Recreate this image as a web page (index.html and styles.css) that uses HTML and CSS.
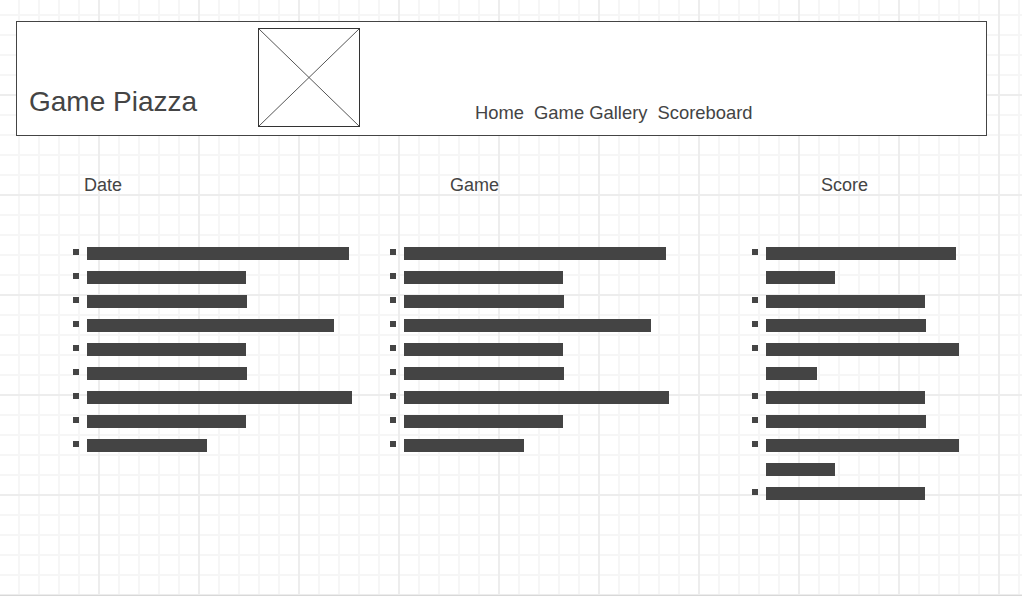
FILE: index.html
```html
<!DOCTYPE html>
<html lang="en">
<head>
<meta charset="utf-8">
<title>Game Piazza</title>
<link rel="stylesheet" href="styles.css">
</head>
<body>
<div class="page">
  <header class="header">
    <h1 class="title">Game Piazza</h1>
    <div class="logo">
      <svg width="100" height="97" viewBox="0 0 100 97" preserveAspectRatio="none">
        <line x1="0" y1="0" x2="100" y2="97" stroke="#555" stroke-width="1"/>
        <line x1="100" y1="0" x2="0" y2="97" stroke="#555" stroke-width="1"/>
      </svg>
    </div>
    <nav class="nav">
      <span class="nav-item">Home</span>
      <span class="nav-item">Game Gallery</span>
      <span class="nav-item">Scoreboard</span>
    </nav>
  </header>

  <main class="columns">
    <section class="col col-date">
      <h2 class="col-title">Date</h2>
      <ul class="list">
        <li class="row"><span class="bullet"></span><div class="bars"><span class="bar" style="width:262px"></span></div></li>
        <li class="row"><span class="bullet"></span><div class="bars"><span class="bar" style="width:159px"></span></div></li>
        <li class="row"><span class="bullet"></span><div class="bars"><span class="bar" style="width:160px"></span></div></li>
        <li class="row"><span class="bullet"></span><div class="bars"><span class="bar" style="width:247px"></span></div></li>
        <li class="row"><span class="bullet"></span><div class="bars"><span class="bar" style="width:159px"></span></div></li>
        <li class="row"><span class="bullet"></span><div class="bars"><span class="bar" style="width:160px"></span></div></li>
        <li class="row"><span class="bullet"></span><div class="bars"><span class="bar" style="width:265px"></span></div></li>
        <li class="row"><span class="bullet"></span><div class="bars"><span class="bar" style="width:159px"></span></div></li>
        <li class="row"><span class="bullet"></span><div class="bars"><span class="bar" style="width:120px"></span></div></li>
      </ul>
    </section>

    <section class="col col-game">
      <h2 class="col-title">Game</h2>
      <ul class="list">
        <li class="row"><span class="bullet"></span><div class="bars"><span class="bar" style="width:262px"></span></div></li>
        <li class="row"><span class="bullet"></span><div class="bars"><span class="bar" style="width:159px"></span></div></li>
        <li class="row"><span class="bullet"></span><div class="bars"><span class="bar" style="width:160px"></span></div></li>
        <li class="row"><span class="bullet"></span><div class="bars"><span class="bar" style="width:247px"></span></div></li>
        <li class="row"><span class="bullet"></span><div class="bars"><span class="bar" style="width:159px"></span></div></li>
        <li class="row"><span class="bullet"></span><div class="bars"><span class="bar" style="width:160px"></span></div></li>
        <li class="row"><span class="bullet"></span><div class="bars"><span class="bar" style="width:265px"></span></div></li>
        <li class="row"><span class="bullet"></span><div class="bars"><span class="bar" style="width:159px"></span></div></li>
        <li class="row"><span class="bullet"></span><div class="bars"><span class="bar" style="width:120px"></span></div></li>
      </ul>
    </section>

    <section class="col col-score">
      <h2 class="col-title">Score</h2>
      <ul class="list">
        <li class="row"><span class="bullet"></span><div class="bars"><span class="bar" style="width:190px"></span><span class="bar" style="width:69px"></span></div></li>
        <li class="row"><span class="bullet"></span><div class="bars"><span class="bar" style="width:159px"></span></div></li>
        <li class="row"><span class="bullet"></span><div class="bars"><span class="bar" style="width:160px"></span></div></li>
        <li class="row"><span class="bullet"></span><div class="bars"><span class="bar" style="width:193px"></span><span class="bar" style="width:51px"></span></div></li>
        <li class="row"><span class="bullet"></span><div class="bars"><span class="bar" style="width:159px"></span></div></li>
        <li class="row"><span class="bullet"></span><div class="bars"><span class="bar" style="width:160px"></span></div></li>
        <li class="row"><span class="bullet"></span><div class="bars"><span class="bar" style="width:193px"></span><span class="bar" style="width:69px"></span></div></li>
        <li class="row"><span class="bullet"></span><div class="bars"><span class="bar" style="width:159px"></span></div></li>
      </ul>
    </section>
  </main>
</div>
</body>
</html>
```

FILE: styles.css
```css
html, body {
  margin: 0;
  padding: 0;
}

body {
  font-family: "Liberation Sans", Arial, sans-serif;
  color: #444;
  background-color: #ffffff;
  background-image:
    linear-gradient(to right, #ededed 2px, transparent 2px),
    linear-gradient(to bottom, #ededed 2px, transparent 2px),
    linear-gradient(to right, #f6f6f6 2px, transparent 2px),
    linear-gradient(to bottom, #f6f6f6 2px, transparent 2px);
  background-size: 100px 100px, 100px 100px, 20px 20px, 20px 20px;
  background-position: 98px 0, 0 94px, 18px 0, 0 14px;
}

.page {
  box-sizing: border-box;
  height: 596px;
  padding-top: 21px;
  border-bottom: 1px solid #d8d8d8;
  overflow: hidden;
}

.header {
  box-sizing: border-box;
  margin-left: 16px;
  width: 971px;
  height: 115px;
  border: 1px solid #444;
  background: #fff;
  display: flex;
  align-items: flex-start;
  padding-left: 12px;
}

.title {
  margin: 64px 0 0;
  width: 229px;
  font-size: 28px;
  line-height: 32px;
  font-weight: normal;
  color: #444;
}

.logo {
  box-sizing: border-box;
  margin-top: 6px;
  width: 102px;
  height: 99px;
  border: 1px solid #333;
  flex: none;
}

.logo svg {
  display: block;
}

.nav {
  display: flex;
  gap: 10px;
  margin-left: 115px;
  margin-top: 80px;
  font-size: 18.4px;
  line-height: 22px;
  color: #444;
  white-space: nowrap;
}

.columns {
  display: flex;
  margin-top: 38px;
  padding-left: 73px;
}

.col-date { width: 317px; }
.col-game { width: 362px; }
.col-score { flex: 1; }

.col-title {
  margin: 0;
  font-size: 18px;
  line-height: 22px;
  font-weight: normal;
  color: #444;
}

.col-date .col-title { padding-left: 11px; }
.col-game .col-title { padding-left: 60px; }
.col-score .col-title { padding-left: 69px; }

.list {
  list-style: none;
  margin: 51px 0 0;
  padding: 0;
}

.row {
  display: flex;
  align-items: flex-start;
  gap: 8px;
}

.bullet {
  flex: none;
  width: 6px;
  height: 6px;
  margin-top: 2px;
  background: #444;
}

.bars {
  display: flex;
  flex-direction: column;
  align-items: flex-start;
}

.bar {
  display: block;
  height: 13px;
  margin-bottom: 11px;
  background: #444;
}
```
